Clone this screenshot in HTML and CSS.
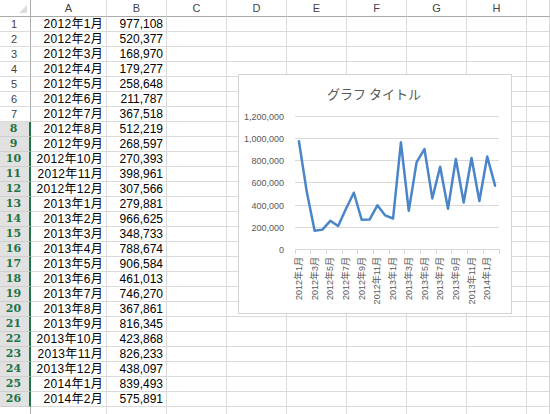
FILE: index.html
```html
<!DOCTYPE html>
<html lang="ja">
<head>
<meta charset="utf-8">
<title>Sheet</title>
<link rel="stylesheet" href="styles.css">
</head>
<body>
<div class="sheet">
  <div class="row head">
    <div class="corner"><svg width="8" height="8" viewBox="0 0 8 8"><polygon points="8,0 8,8 0,8" fill="#dcdcdc"/></svg></div>
    <div class="ch">A</div><div class="ch">B</div><div class="ch">C</div><div class="ch">D</div><div class="ch">E</div><div class="ch">F</div><div class="ch">G</div><div class="ch">H</div><div class="ch"></div>
  </div>
  <div class="row"><div class="rh">1</div><div class="c d">2012年1月</div><div class="c">977,108</div><div class="c"></div><div class="c"></div><div class="c"></div><div class="c"></div><div class="c"></div><div class="c"></div><div class="c"></div></div>
  <div class="row"><div class="rh">2</div><div class="c d">2012年2月</div><div class="c">520,377</div><div class="c"></div><div class="c"></div><div class="c"></div><div class="c"></div><div class="c"></div><div class="c"></div><div class="c"></div></div>
  <div class="row"><div class="rh">3</div><div class="c d">2012年3月</div><div class="c">168,970</div><div class="c"></div><div class="c"></div><div class="c"></div><div class="c"></div><div class="c"></div><div class="c"></div><div class="c"></div></div>
  <div class="row"><div class="rh">4</div><div class="c d">2012年4月</div><div class="c">179,277</div><div class="c"></div><div class="c"></div><div class="c"></div><div class="c"></div><div class="c"></div><div class="c"></div><div class="c"></div></div>
  <div class="row"><div class="rh">5</div><div class="c d">2012年5月</div><div class="c">258,648</div><div class="c"></div><div class="c"></div><div class="c"></div><div class="c"></div><div class="c"></div><div class="c"></div><div class="c"></div></div>
  <div class="row"><div class="rh">6</div><div class="c d">2012年6月</div><div class="c">211,787</div><div class="c"></div><div class="c"></div><div class="c"></div><div class="c"></div><div class="c"></div><div class="c"></div><div class="c"></div></div>
  <div class="row"><div class="rh">7</div><div class="c d">2012年7月</div><div class="c">367,518</div><div class="c"></div><div class="c"></div><div class="c"></div><div class="c"></div><div class="c"></div><div class="c"></div><div class="c"></div></div>
  <div class="row"><div class="rh sel">8</div><div class="c d">2012年8月</div><div class="c">512,219</div><div class="c"></div><div class="c"></div><div class="c"></div><div class="c"></div><div class="c"></div><div class="c"></div><div class="c"></div></div>
  <div class="row"><div class="rh sel">9</div><div class="c d">2012年9月</div><div class="c">268,597</div><div class="c"></div><div class="c"></div><div class="c"></div><div class="c"></div><div class="c"></div><div class="c"></div><div class="c"></div></div>
  <div class="row"><div class="rh sel">10</div><div class="c d">2012年10月</div><div class="c">270,393</div><div class="c"></div><div class="c"></div><div class="c"></div><div class="c"></div><div class="c"></div><div class="c"></div><div class="c"></div></div>
  <div class="row"><div class="rh sel">11</div><div class="c d">2012年11月</div><div class="c">398,961</div><div class="c"></div><div class="c"></div><div class="c"></div><div class="c"></div><div class="c"></div><div class="c"></div><div class="c"></div></div>
  <div class="row"><div class="rh sel">12</div><div class="c d">2012年12月</div><div class="c">307,566</div><div class="c"></div><div class="c"></div><div class="c"></div><div class="c"></div><div class="c"></div><div class="c"></div><div class="c"></div></div>
  <div class="row"><div class="rh sel">13</div><div class="c d">2013年1月</div><div class="c">279,881</div><div class="c"></div><div class="c"></div><div class="c"></div><div class="c"></div><div class="c"></div><div class="c"></div><div class="c"></div></div>
  <div class="row"><div class="rh sel">14</div><div class="c d">2013年2月</div><div class="c">966,625</div><div class="c"></div><div class="c"></div><div class="c"></div><div class="c"></div><div class="c"></div><div class="c"></div><div class="c"></div></div>
  <div class="row"><div class="rh sel">15</div><div class="c d">2013年3月</div><div class="c">348,733</div><div class="c"></div><div class="c"></div><div class="c"></div><div class="c"></div><div class="c"></div><div class="c"></div><div class="c"></div></div>
  <div class="row"><div class="rh sel">16</div><div class="c d">2013年4月</div><div class="c">788,674</div><div class="c"></div><div class="c"></div><div class="c"></div><div class="c"></div><div class="c"></div><div class="c"></div><div class="c"></div></div>
  <div class="row"><div class="rh sel">17</div><div class="c d">2013年5月</div><div class="c">906,584</div><div class="c"></div><div class="c"></div><div class="c"></div><div class="c"></div><div class="c"></div><div class="c"></div><div class="c"></div></div>
  <div class="row"><div class="rh sel">18</div><div class="c d">2013年6月</div><div class="c">461,013</div><div class="c"></div><div class="c"></div><div class="c"></div><div class="c"></div><div class="c"></div><div class="c"></div><div class="c"></div></div>
  <div class="row"><div class="rh sel">19</div><div class="c d">2013年7月</div><div class="c">746,270</div><div class="c"></div><div class="c"></div><div class="c"></div><div class="c"></div><div class="c"></div><div class="c"></div><div class="c"></div></div>
  <div class="row"><div class="rh sel">20</div><div class="c d">2013年8月</div><div class="c">367,861</div><div class="c"></div><div class="c"></div><div class="c"></div><div class="c"></div><div class="c"></div><div class="c"></div><div class="c"></div></div>
  <div class="row"><div class="rh sel">21</div><div class="c d">2013年9月</div><div class="c">816,345</div><div class="c"></div><div class="c"></div><div class="c"></div><div class="c"></div><div class="c"></div><div class="c"></div><div class="c"></div></div>
  <div class="row"><div class="rh sel">22</div><div class="c d">2013年10月</div><div class="c">423,868</div><div class="c"></div><div class="c"></div><div class="c"></div><div class="c"></div><div class="c"></div><div class="c"></div><div class="c"></div></div>
  <div class="row"><div class="rh sel">23</div><div class="c d">2013年11月</div><div class="c">826,233</div><div class="c"></div><div class="c"></div><div class="c"></div><div class="c"></div><div class="c"></div><div class="c"></div><div class="c"></div></div>
  <div class="row"><div class="rh sel">24</div><div class="c d">2013年12月</div><div class="c">438,097</div><div class="c"></div><div class="c"></div><div class="c"></div><div class="c"></div><div class="c"></div><div class="c"></div><div class="c"></div></div>
  <div class="row"><div class="rh sel">25</div><div class="c d">2014年1月</div><div class="c">839,493</div><div class="c"></div><div class="c"></div><div class="c"></div><div class="c"></div><div class="c"></div><div class="c"></div><div class="c"></div></div>
  <div class="row"><div class="rh sel">26</div><div class="c d">2014年2月</div><div class="c">575,891</div><div class="c"></div><div class="c"></div><div class="c"></div><div class="c"></div><div class="c"></div><div class="c"></div><div class="c"></div></div>
  <div class="row"><div class="rh"></div><div class="c"></div><div class="c"></div><div class="c"></div><div class="c"></div><div class="c"></div><div class="c"></div><div class="c"></div><div class="c"></div><div class="c"></div></div>
</div>

<div class="chart">
  <svg class="chart-svg" width="274" height="240" viewBox="0 0 274 240">
    <text class="title" x="136" y="25" text-anchor="middle">グラフ タイトル</text>
    <g class="grid">
      <line x1="57" y1="42.5" x2="261" y2="42.5"/>
      <line x1="57" y1="64.5" x2="261" y2="64.5"/>
      <line x1="57" y1="86.5" x2="261" y2="86.5"/>
      <line x1="57" y1="108.5" x2="261" y2="108.5"/>
      <line x1="57" y1="131.5" x2="261" y2="131.5"/>
      <line x1="57" y1="153.5" x2="261" y2="153.5"/>
    </g>
    <g class="axis">
      <line x1="57" y1="175.5" x2="262" y2="175.5"/>
      <line x1="57.5" y1="175.5" x2="57.5" y2="180"/>
      <line x1="72.5" y1="175.5" x2="72.5" y2="180"/>
      <line x1="88.5" y1="175.5" x2="88.5" y2="180"/>
      <line x1="104.5" y1="175.5" x2="104.5" y2="180"/>
      <line x1="119.5" y1="175.5" x2="119.5" y2="180"/>
      <line x1="135.5" y1="175.5" x2="135.5" y2="180"/>
      <line x1="151.5" y1="175.5" x2="151.5" y2="180"/>
      <line x1="166.5" y1="175.5" x2="166.5" y2="180"/>
      <line x1="182.5" y1="175.5" x2="182.5" y2="180"/>
      <line x1="198.5" y1="175.5" x2="198.5" y2="180"/>
      <line x1="213.5" y1="175.5" x2="213.5" y2="180"/>
      <line x1="229.5" y1="175.5" x2="229.5" y2="180"/>
      <line x1="245.5" y1="175.5" x2="245.5" y2="180"/>
      <line x1="261.5" y1="175.5" x2="261.5" y2="180"/>
    </g>
    <g class="ylab">
      <text x="46" y="45.5">1,200,000</text>
      <text x="46" y="67.5">1,000,000</text>
      <text x="46" y="89.5">800,000</text>
      <text x="46" y="111.5">600,000</text>
      <text x="46" y="134.5">400,000</text>
      <text x="46" y="156.5">200,000</text>
      <text x="46" y="178.5">0</text>
    </g>
    <g class="xlab">
      <text transform="translate(64,183) rotate(-90)">2012年1月</text>
      <text transform="translate(79.6,183) rotate(-90)">2012年3月</text>
      <text transform="translate(95.3,183) rotate(-90)">2012年5月</text>
      <text transform="translate(111,183) rotate(-90)">2012年7月</text>
      <text transform="translate(126.7,183) rotate(-90)">2012年9月</text>
      <text transform="translate(142.4,183) rotate(-90)">2012年11月</text>
      <text transform="translate(158.1,183) rotate(-90)">2013年1月</text>
      <text transform="translate(173.8,183) rotate(-90)">2013年3月</text>
      <text transform="translate(189.5,183) rotate(-90)">2013年5月</text>
      <text transform="translate(205.2,183) rotate(-90)">2013年7月</text>
      <text transform="translate(220.9,183) rotate(-90)">2013年9月</text>
      <text transform="translate(236.5,183) rotate(-90)">2013年11月</text>
      <text transform="translate(252.2,183) rotate(-90)">2014年1月</text>
    </g>
    <polyline class="series" points="60.92,67.20 68.77,117.83 76.62,156.77 84.46,155.63 92.31,146.83 100.15,152.03 108.0,134.77 115.85,118.73 123.69,145.73 131.54,145.53 139.38,131.28 147.23,141.41 155.08,144.48 162.92,68.37 170.77,136.85 178.62,88.09 186.46,75.02 194.31,124.41 202.15,92.79 210.0,134.73 217.85,85.02 225.69,128.52 233.54,83.93 241.38,126.94 249.23,82.46 257.08,111.67"/>
  </svg>
</div>
</body>
</html>
```
FILE: styles.css
```css
html, body {
  margin: 0;
  padding: 0;
  background: #ffffff;
}
body {
  width: 550px;
  height: 414px;
  overflow: hidden;
  position: relative;
  font-family: "Liberation Sans", "Noto Sans CJK JP", sans-serif;
}
.sheet {
  display: flex;
  flex-direction: column;
  width: 550px;
  height: 414px;
  overflow: hidden;
}
.row {
  display: grid;
  grid-template-columns: 31px 76px repeat(7, 60px) 23px;
  height: 15px;
  flex: none;
}
.row.head {
  height: 17px;
}
.corner {
  box-sizing: border-box;
  border-right: 1px solid #ababab;
  border-bottom: 1px solid #ababab;
  display: flex;
  justify-content: flex-end;
  align-items: flex-end;
  padding: 0 3px 3px 0;
}
.corner svg {
  display: block;
}
.ch {
  box-sizing: border-box;
  border-right: 1px solid #dcdcdc;
  border-bottom: 1px solid #ababab;
  font-size: 11px;
  line-height: 16px;
  color: #444444;
  text-align: center;
}
.rh {
  box-sizing: border-box;
  border-right: 1px solid #ababab;
  border-bottom: 1px solid #dcdcdc;
  font-size: 11px;
  line-height: 14px;
  color: #444444;
  text-align: center;
  padding-right: 2px;
}
.rh.sel {
  background: #e1e1e1;
  color: #217346;
  font-family: "DejaVu Serif", serif;
  font-weight: bold;
  font-size: 11px;
  border-right: 2px solid #217346;
  border-bottom: 1px solid #cfcfcf;
}
.c {
  box-sizing: border-box;
  border-right: 1px solid #dadada;
  border-bottom: 1px solid #dadada;
  font-size: 12px;
  line-height: 14px;
  color: #000000;
  text-align: right;
  padding-right: 3px;
  white-space: nowrap;
  overflow: hidden;
}
.c.d {
  letter-spacing: 0.3px;
}
.chart {
  position: absolute;
  left: 238px;
  top: 74px;
  width: 274px;
  height: 240px;
  box-sizing: border-box;
  border: 1px solid #d4d4d4;
  background: #ffffff;
}
.chart-svg {
  position: absolute;
  left: -1px;
  top: -1px;
  display: block;
}
.title {
  font-family: "Noto Sans CJK JP", sans-serif;
  font-size: 13px;
  fill: #595959;
}
.grid line {
  stroke: #d9d9d9;
  stroke-width: 1;
}
.axis line {
  stroke: #d9d9d9;
  stroke-width: 1;
}
.ylab text {
  font-family: "Liberation Sans", sans-serif;
  font-size: 9px;
  fill: #595959;
  text-anchor: end;
}
.xlab text {
  font-family: "Liberation Sans", "Noto Sans CJK JP", sans-serif;
  font-size: 9px;
  fill: #595959;
  text-anchor: end;
}
.series {
  fill: none;
  stroke: #4a85c8;
  stroke-width: 2.5;
  stroke-linejoin: round;
  stroke-linecap: round;
}
```
